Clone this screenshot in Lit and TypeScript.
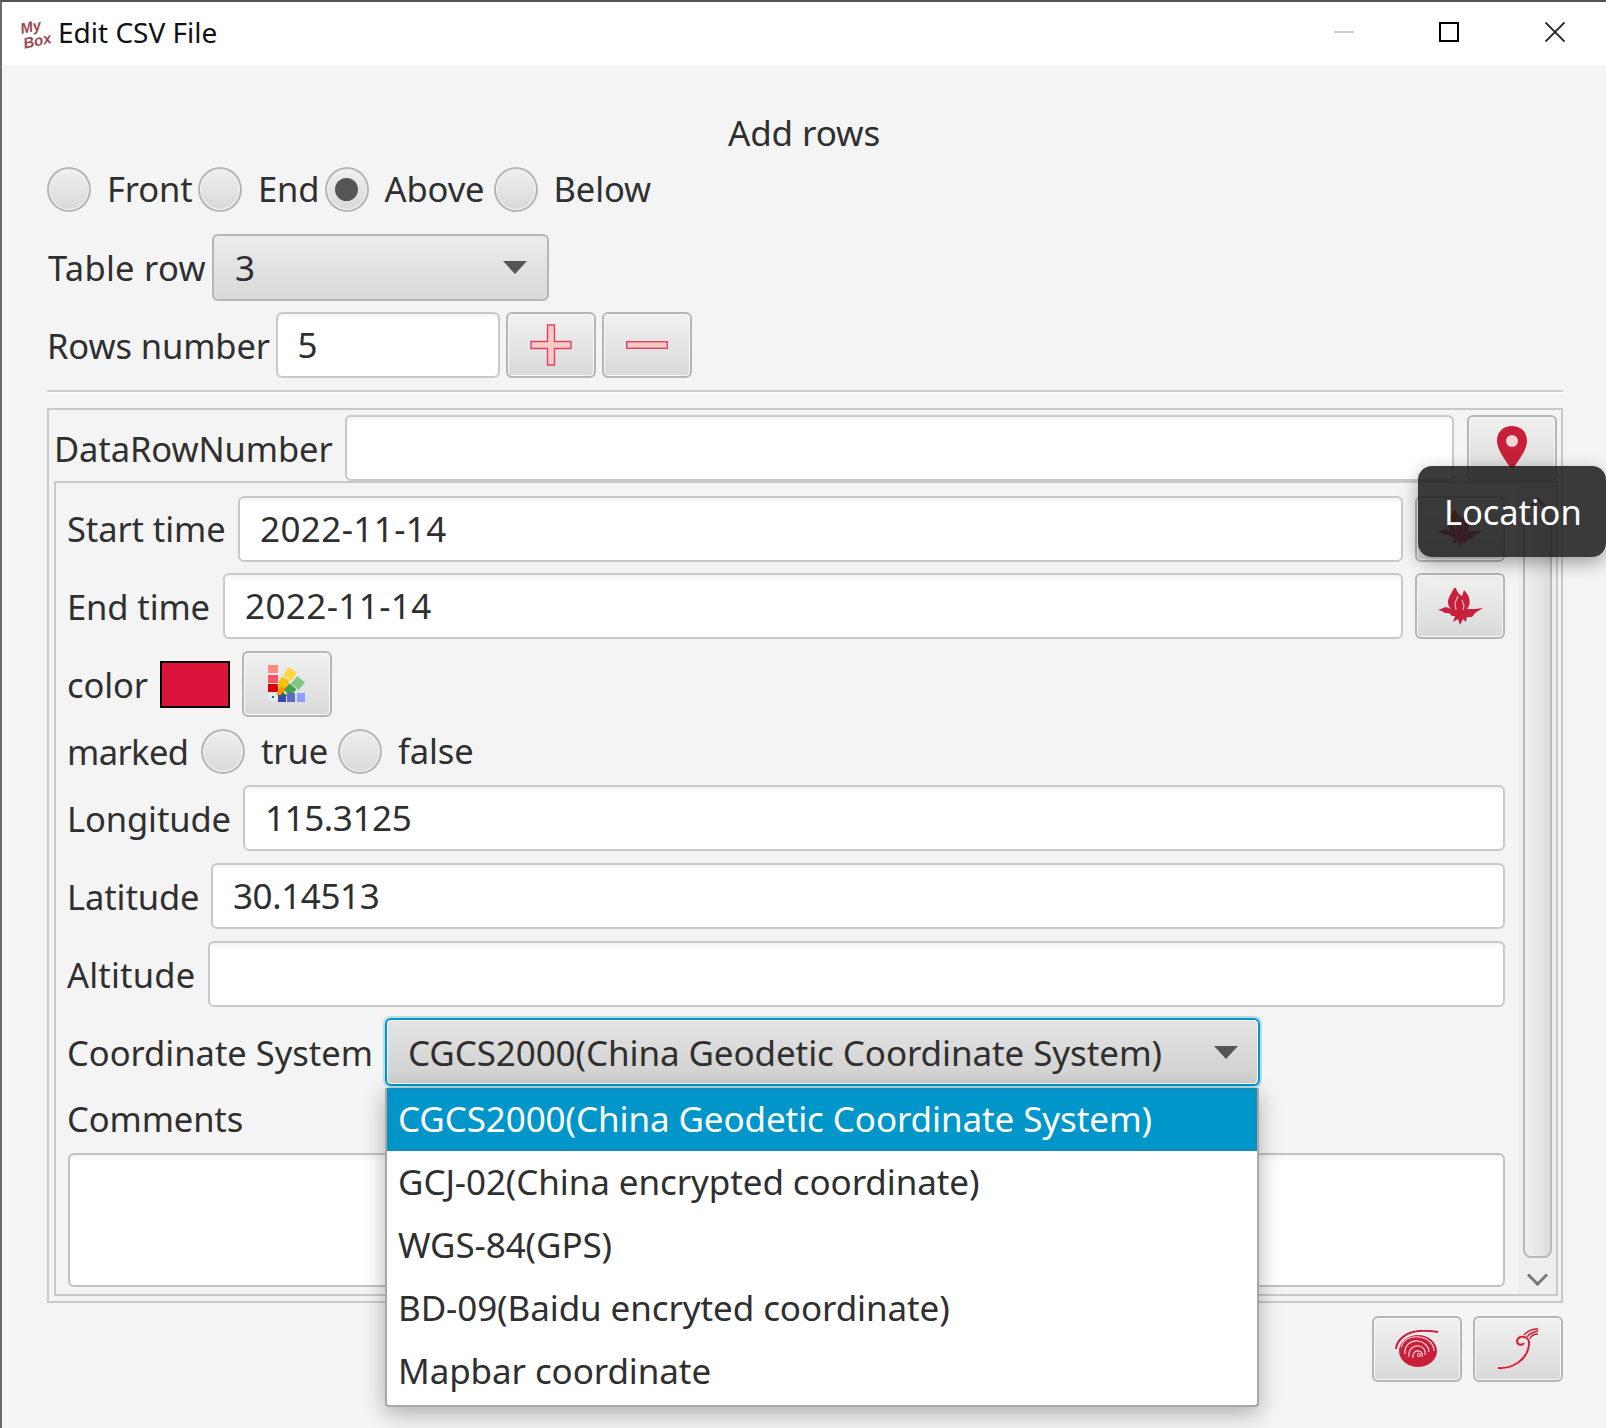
import { LitElement, html, svg, css } from 'lit';
import { customElement } from 'lit/decorators.js';

const fireIcon = svg`<svg class="ico" width="45" height="37" viewBox="0 0 45 37">
  <path fill="#c8203a" d="M16 0c-2 5-6 9-6 14 0 3 1 5 3 7l-5-2-8 3 4 1 3 2h4l3 3h3l-2 6 5-3 2 6 3-6 3 3 1-5h5l3-4 8-5-8 1-8 0c4-4 4-12-3-19l-2 6-3-2c-1-2-3-4-3-6z"/>
  <path fill="none" stroke="#f6c4c8" stroke-width="1.100" d="M20 8l-3 7 1 7M24 12l2 6-1 4"/>
</svg>`;

const pinIcon = svg`<svg class="ico" width="30" height="44" viewBox="0 0 30 44">
  <path fill="#c8203a" d="M15 0C6 0 0 6 0 15c0 9 9 20 15 29 6-9 15-20 15-29C30 6 24 0 15 0z"/>
  <circle cx="15" cy="15" r="6" fill="#fbd3d3"/>
</svg>`;

const paletteIcon = svg`<svg class="ico" width="38" height="38" viewBox="0 0 38 38">
  <rect x="0" y="0" width="10" height="8" fill="#ff8a80"/>
  <rect x="0" y="10" width="10" height="8" fill="#ff5060"/>
  <rect x="0" y="19" width="10" height="8" fill="#d50000"/>
  <rect x="0" y="28" width="10" height="8" fill="#e3eaf0"/>
  <rect x="4" y="31" width="2" height="2" fill="#556"/>
  <rect x="17" y="4" width="10" height="10" fill="#ffd740" transform="rotate(30 22 9)"/>
  <rect x="11" y="13" width="9" height="10" fill="#ffc107" transform="rotate(25 15 18)"/>
  <rect x="10" y="22" width="6" height="9" fill="#ff9800" transform="rotate(20 13 26)"/>
  <rect x="25" y="13" width="10" height="10" fill="#81c784" transform="rotate(40 30 18)"/>
  <rect x="18" y="20" width="9" height="9" fill="#43a047" transform="rotate(40 22 24)"/>
  <path fill="#2e7d32" d="M10 36l4-9 5 3-3 6z"/>
  <rect x="10" y="30" width="8" height="7" fill="#3949ab"/>
  <rect x="19" y="28" width="8" height="9" fill="#5c6bc0"/>
  <rect x="29" y="28" width="8" height="9" fill="#8c9eff"/>
</svg>`;

const spiralIcon = svg`<svg class="ico" width="44" height="38" viewBox="0 0 44 38">
  <path fill="none" stroke="#c8203a" stroke-width="2" d="M1 19C2 9 12 2 24 1c6-.5 13 0 19 1"/>
  <ellipse cx="23" cy="21" rx="19" ry="16" fill="#c8203a"/>
  <path fill="none" stroke="#f9dcdc" stroke-width="1.100" d="M6 17C9 9 16 6 24 7c9 1 15 7 15 14M10 24C9 15 16 10 23 11c7 1 11 6 11 11M14 27C13 20 18 15 24 16c5 1 7 5 6 9M18 28c-1-4 2-8 6-7 3 1 4 3 3 6"/>
  <circle cx="24" cy="25" r="2" fill="#f9dcdc"/>
  <circle cx="24" cy="25" r="1" fill="#c8203a"/>
</svg>`;

const tailIcon = svg`<svg class="ico" width="44" height="44" viewBox="0 0 44 44">
  <path fill="none" stroke="#fbd0d0" stroke-width="4" d="M2 41c14 1 30-8 31-24C34 9 22 7 21 14c0 4 5 5 7 2"/>
  <path fill="none" stroke="#c8203a" stroke-width="1.800" d="M2 41c14 1 30-8 31-24C34 9 22 7 21 14c0 4 5 5 7 2"/>
  <path fill="none" stroke="#fbd0d0" stroke-width="3" d="M30 8c3-4 8-6 13-6"/>
  <path fill="none" stroke="#c8203a" stroke-width="1.300" d="M28 8c3-4 8-6 14-6M31 10c3-4 6-5 11-6M34 12c1-3 4-5 8-5"/>
</svg>`;

const plusIcon = svg`<svg class="ico" width="42" height="42" viewBox="0 0 42 42">
  <path fill="#fcc9c9" stroke="#d8455c" stroke-width="1.400" d="M17.500 1h7v16.500h16.500v7H24.500V41h-7V24.500H1v-7h16.500z"/>
</svg>`;

const minusIcon = svg`<svg class="ico" width="42" height="8" viewBox="0 0 42 8">
  <rect x=".7" y=".7" width="40.600" height="6.600" fill="#fcc9c9" stroke="#d8455c" stroke-width="1.400"/>
</svg>`;

const closeIcon = svg`<svg width="20" height="20" viewBox="0 0 20 20">
  <path stroke="#222" stroke-width="1.900" d="M.5.5l19 19M19.500.5l-19 19"/>
</svg>`;

const coordinates = [
  'CGCS2000(China Geodetic Coordinate System)',
  'GCJ-02(China encrypted coordinate)',
  'WGS-84(GPS)',
  'BD-09(Baidu encryted coordinate)',
  'Mapbar coordinate',
];

@customElement('app-root')
export class AppRoot extends LitElement {
  static styles = css`
    :host {
      display: block;
      position: relative;
      width: 1606px;
      height: 1428px;
      overflow: hidden;
      background: #f4f4f4;
      color: #2f2f2f;
      font-family: "Noto Sans", sans-serif;
      font-size: 35px;
      letter-spacing: -0.1px;
    }

    .frame {
      height: 1426px;
      border-left: 2px solid #6a6a6a;
      border-top: 2px solid #555;
      border-bottom: 2px solid #444;
    }

    .titlebar {
      display: flex;
      align-items: center;
      height: 63px;
      background: #fff;
      color: #111;
      font-size: 28px;
      letter-spacing: 0;
    }
    .title { flex: 1; margin-bottom: 4px; }
    .logo {
      display: flex;
      flex-direction: column;
      width: 30px;
      margin-left: 18px;
      margin-right: 8px;
      margin-bottom: 2px;
      color: #9a4a54;
      font: italic 700 15px/15px "Liberation Sans", sans-serif;
    }
    .logo span { white-space: nowrap; transform: rotate(-12deg); }
    .logo span:last-child { margin-left: 3px; }
    .winbtns { display: flex; align-items: center; margin-right: 41px; margin-bottom: 3px; }
    .min { width: 20px; height: 2px; background: #ccc; margin-right: 85px; }
    .max { width: 20px; height: 20px; box-sizing: border-box; border: 2px solid #000; margin-right: 86px; }
    .winbtns svg { display: block; }

    .content { padding: 0 43px 0 45px; }
    .heading { height: 100px; padding-top: 38px; box-sizing: border-box; text-align: center; line-height: 60px; margin-left: -2px; }

    .radios {
      display: grid;
      grid-template-columns: 44px 107px 44px 82.500px 44px 125px 44px 1fr;
      align-items: center;
      height: 45px;
    }
    .radio {
      flex: none;
      box-sizing: border-box;
      width: 44px;
      height: 45px;
      border-radius: 50%;
      border: 2px solid #b6b6b6;
      background: linear-gradient(#efefef, #d9d9d9);
      box-shadow: inset 0 0 0 1px #f6f6f6;
      display: flex;
      align-items: center;
      justify-content: center;
    }
    .radio.on::after { content: ''; width: 23px; height: 23px; border-radius: 50%; background: #555; }
    .radio-text { padding-left: 16px; padding-bottom: 2px; font-size: 34.500px; white-space: nowrap; }

    .row { display: flex; align-items: center; height: 66px; }
    .row.first { margin-top: 24px; }
    .row.second { margin-top: 12px; }
    .label { flex: none; font-size: 34.500px; white-space: nowrap; }
    .l-table { width: 164px; margin-left: 1px; letter-spacing: 0.3px; }
    .l-rows { width: 228.500px; }
    .l-data { width: 291px; }
    .scroll .label { margin-left: -1px; margin-right: 1px; }
    .l-start { width: 170px; }
    .l-end { width: 155px; }
    .l-color { width: 92px; }
    .l-marked { width: 133px; letter-spacing: -0.6px; }
    .l-long { width: 175px; }
    .l-lat { width: 143px; }
    .l-alt { width: 140px; letter-spacing: 0.2px; }
    .l-coord { width: 317px; letter-spacing: 0; }

    .btn {
      flex: none;
      box-sizing: border-box;
      width: 90px;
      height: 66px;
      border: 2px solid #b6b6b6;
      border-radius: 6px;
      background: linear-gradient(#f1f1f1, #d9d9d9);
      box-shadow: inset 0 0 0 1px #f7f7f7;
      display: flex;
      align-items: center;
      justify-content: center;
    }
    .ico { display: block; }

    .field {
      flex: none;
      box-sizing: border-box;
      height: 66px;
      padding-left: 20px;
      border: 2px solid #c9c9c9;
      border-radius: 6px;
      background: linear-gradient(#f3f3f3, #fff 6px);
      line-height: 62px;
    }
    .date { letter-spacing: 0.4px; }
    .coord-value { letter-spacing: -0.4px; }
    .grow { flex: 1; min-width: 0; }
    .field.rows { width: 224px; margin-right: 6px; }
    .btn.minus { margin-left: 6px; }

    .combo {
      flex: none;
      box-sizing: border-box;
      display: flex;
      align-items: center;
      justify-content: space-between;
      height: 67px;
      padding: 0 20px 0 21px;
      border: 2px solid #b6b6b6;
      border-radius: 6px;
      background: linear-gradient(#ececec, #d9d9d9);
    }
    .combo.table { width: 337px; }
    .arrow { width: 0; height: 0; border-left: 12px solid transparent; border-right: 12px solid transparent; border-top: 13px solid #555; }

    .sep { height: 2px; margin-top: 12px; background: #cdcdcd; box-shadow: 0 2px 0 #fafafa; }

    .outer {
      margin-top: 16px;
      height: 895px;
      box-sizing: border-box;
      padding: 5px;
      border: 2px solid #c9c9c9;
    }
    .data-row { display: flex; align-items: center; height: 66px; margin-right: -1px; }
    .data-row .field { margin-right: 13px; }

    .inner { display: flex; height: 815px; box-sizing: border-box; border: 2px solid #c9c9c9; margin-right: -2px; }
    .scroll { flex: 1; min-width: 0; padding: 13px 13px 0 12px; }

    .r { display: flex; align-items: center; height: 66px; margin-bottom: 12px; }
    .r .btn { margin-left: 12px; }
    .r.short { height: 65px; }
    .r.color { margin-bottom: 12px; }
    .r.marked { height: 45px; margin-bottom: 11px; }
    .r.coord { height: 68px; margin-top: -1px; margin-bottom: 0; }
    .marks {
      display: grid;
      grid-template-columns: 44px 93px 44px 1fr;
      align-items: center;
    }
    .marks .radio-text { padding-left: 16px; }

    .swatch { flex: none; box-sizing: border-box; width: 70px; height: 47px; border: 2px solid #000; background: #dc143c; }

    .combo.coord {
      width: 875px;
      height: 68px;
      border-color: #0096c9;
      background: linear-gradient(#e4e4e4, #cfcfcf);
      box-shadow: 0 0 0 2px rgba(0, 150, 201, 0.25), inset 0 0 0 1px #fff;
    }

    .comment-label { height: 42px; margin-top: 12px; margin-left: -1px; font-size: 34.500px; line-height: 42px; }
    .textarea {
      box-sizing: border-box;
      height: 134px;
      margin-top: 13px;
      border: 2px solid #c2c2c2;
      border-radius: 6px;
      background: linear-gradient(#f3f3f3, #fff 6px);
    }

    .scrollbar {
      flex: none;
      display: flex;
      flex-direction: column;
      align-items: center;
      width: 38px;
      background: #efefef;
    }
    .chev {
      flex: none;
      box-sizing: border-box;
      width: 15px;
      height: 15px;
      margin-top: 17px;
      border: solid #777;
      border-width: 3px 0 0 3px;
      transform: rotate(45deg);
    }
    .thumb {
      flex: 1;
      box-sizing: border-box;
      width: 29px;
      margin-top: 2px;
      border: 2px solid #b9b9b9;
      border-radius: 8px;
      background: linear-gradient(90deg, #efefef, #dedede);
    }
    .chev.down { transform: rotate(225deg); margin-top: 10px; margin-bottom: 11px; }

    .footer { display: flex; justify-content: flex-end; gap: 11px; margin-top: 13px; }

    /* floating over the form */
    .tooltip {
      position: absolute;
      left: 1418px;
      top: 466px;
      width: 188px;
      height: 91px;
      box-sizing: border-box;
      padding-left: 26px;
      border-radius: 14px;
      background: rgba(30, 30, 30, 0.87);
      box-shadow: 0 6px 18px rgba(0, 0, 0, 0.35);
      color: #fff;
      font-size: 34.500px;
      line-height: 91px;
      white-space: nowrap;
    }
    .popup {
      position: absolute;
      left: 385px;
      top: 1088px;
      width: 874px;
      box-sizing: border-box;
      padding-bottom: 2px;
      border: solid #a8a8a8;
      border-width: 0 2px 2px 2px;
      border-radius: 0 0 4px 4px;
      background: #fff;
      box-shadow: 0 6px 22px rgba(0, 0, 0, 0.3);
    }
    .item { height: 63px; padding-left: 11px; line-height: 61px; white-space: nowrap; }
    .item.sel { background: #0096c9; color: #fff; box-shadow: inset 0 0 0 3px #0d8fc0; }
  `;

  render() {
    return html`
      <div class="frame">
        <div class="titlebar">
          <div class="logo"><span>My</span><span>Box</span></div>
          <div class="title">Edit CSV File</div>
          <div class="winbtns">
            <div class="min"></div>
            <div class="max"></div>
            ${closeIcon}
          </div>
        </div>
        <div class="content">
          <div class="heading">Add rows</div>
          <div class="radios">
            <div class="radio"></div><span class="radio-text">Front</span>
            <div class="radio"></div><span class="radio-text">End</span>
            <div class="radio on"></div><span class="radio-text">Above</span>
            <div class="radio"></div><span class="radio-text">Below</span>
          </div>
          <div class="row first">
            <span class="label l-table">Table row</span>
            <div class="combo table"><span>3</span><span class="arrow"></span></div>
          </div>
          <div class="row second">
            <span class="label l-rows">Rows number</span>
            <div class="field rows">5</div>
            <div class="btn plus">${plusIcon}</div>
            <div class="btn minus">${minusIcon}</div>
          </div>
          <div class="sep"></div>
          <div class="outer">
            <div class="data-row">
              <span class="label l-data">DataRowNumber</span>
              <div class="field grow"></div>
              <div class="btn">${pinIcon}</div>
            </div>
            <div class="inner">
              <div class="scroll">
                <div class="r short">
                  <span class="label l-start">Start time</span>
                  <div class="field grow date">2022-11-14</div>
                  <div class="btn">${fireIcon}</div>
                </div>
                <div class="r">
                  <span class="label l-end">End time</span>
                  <div class="field grow date">2022-11-14</div>
                  <div class="btn">${fireIcon}</div>
                </div>
                <div class="r color">
                  <span class="label l-color">color</span>
                  <div class="swatch"></div>
                  <div class="btn">${paletteIcon}</div>
                </div>
                <div class="r marked">
                  <span class="label l-marked">marked</span>
                  <div class="marks">
                    <div class="radio"></div><span class="radio-text">true</span>
                    <div class="radio"></div><span class="radio-text">false</span>
                  </div>
                </div>
                <div class="r"><span class="label l-long">Longitude</span><div class="field grow coord-value">115.3125</div></div>
                <div class="r"><span class="label l-lat">Latitude</span><div class="field grow coord-value">30.14513</div></div>
                <div class="r"><span class="label l-alt">Altitude</span><div class="field grow"></div></div>
                <div class="r coord">
                  <span class="label l-coord">Coordinate System</span>
                  <div class="combo coord"><span>${coordinates[0]}</span><span class="arrow"></span></div>
                </div>
                <div class="comment-label">Comments</div>
                <div class="textarea"></div>
              </div>
              <div class="scrollbar">
                <div class="chev"></div>
                <div class="thumb"></div>
                <div class="chev down"></div>
              </div>
            </div>
          </div>
          <div class="footer">
            <div class="btn">${spiralIcon}</div>
            <div class="btn">${tailIcon}</div>
          </div>
        </div>
      </div>
      <div class="tooltip">Location</div>
      <div class="popup">
        ${coordinates.map(
          (c, i) => html`<div class="item ${i === 0 ? 'sel' : ''}">${c}</div>`
        )}
      </div>
    `;
  }
}
